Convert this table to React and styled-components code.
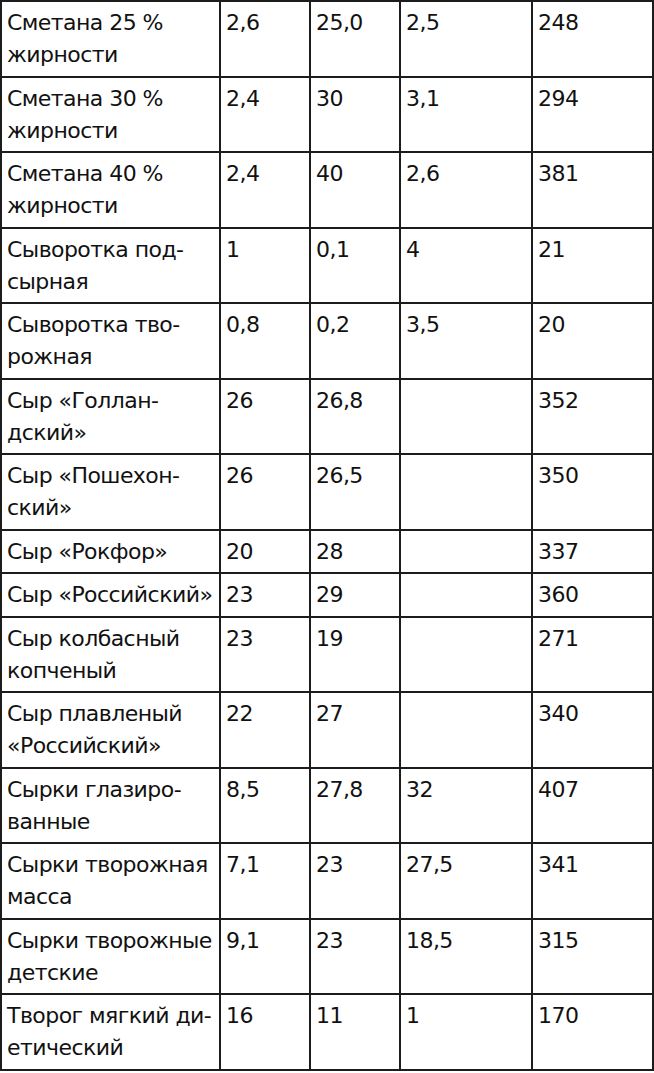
import React from "react";
import styled, { createGlobalStyle } from "styled-components";

const Global = createGlobalStyle`
  html, body { margin: 0; padding: 0; background: #fff; }
  body { font-family: "DejaVu Sans", Verdana, sans-serif; color: #111; }
`;

const Grid = styled.div`
  width: 654px;
  box-sizing: border-box;
  display: grid;
  grid-template-columns: 219px 90px 90px 132px 121px;
  border-left: 2px solid #1c1c1c;
  border-top: 2px solid #1c1c1c;
  font-size: 22px;
  letter-spacing: -0.55px;
  line-height: 32px;
`;

const Cell = styled.div`
  border-right: 2px solid #1c1c1c;
  border-bottom: 2px solid #1c1c1c;
  padding: 5px 2px 4.5px ${(p) => (p.$first ? "5px" : "5px")};
  white-space: nowrap;
  overflow: hidden;
`;

const Line = styled.div``;

const rows = [
  [["Сметана 25 %", "жирности"], "2,6", "25,0", "2,5", "248"],
  [["Сметана 30 %", "жирности"], "2,4", "30", "3,1", "294"],
  [["Сметана 40 %", "жирности"], "2,4", "40", "2,6", "381"],
  [["Сыворотка под-", "сырная"], "1", "0,1", "4", "21"],
  [["Сыворотка тво-", "рожная"], "0,8", "0,2", "3,5", "20"],
  [["Сыр «Голлан-", "дский»"], "26", "26,8", "", "352"],
  [["Сыр «Пошехон-", "ский»"], "26", "26,5", "", "350"],
  [["Сыр «Рокфор»"], "20", "28", "", "337"],
  [["Сыр «Российский»"], "23", "29", "", "360"],
  [["Сыр колбасный", "копченый"], "23", "19", "", "271"],
  [["Сыр плавленый", "«Российский»"], "22", "27", "", "340"],
  [["Сырки глазиро-", "ванные"], "8,5", "27,8", "32", "407"],
  [["Сырки творожная", "масса"], "7,1", "23", "27,5", "341"],
  [["Сырки творожные", "детские"], "9,1", "23", "18,5", "315"],
  [["Творог мягкий ди-", "етический"], "16", "11", "1", "170"],
];

export default function App() {
  return (
    <>
      <Global />
      <Grid>
        {rows.map((r, i) => (
          <React.Fragment key={i}>
            <Cell $first>
              {r[0].map((l, j) => (
                <Line key={j}>{l}</Line>
              ))}
            </Cell>
            {r.slice(1).map((v, j) => (
              <Cell key={j}>{v}</Cell>
            ))}
          </React.Fragment>
        ))}
      </Grid>
    </>
  );
}
